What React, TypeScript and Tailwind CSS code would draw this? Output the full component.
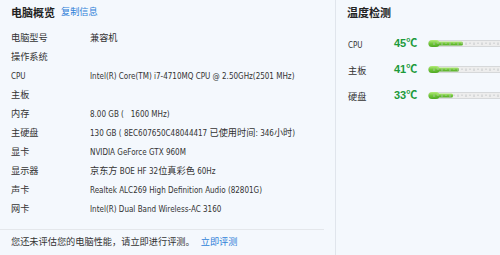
import React from 'react'

const rows: [string, string][] = [
  ['电脑型号', '兼容机'],
  ['操作系统', ''],
  ['CPU', 'Intel(R) Core(TM) i7-4710MQ CPU @ 2.50GHz(2501 MHz)'],
  ['主板', ''],
  ['内存', '8.00 GB (   1600 MHz)'],
  ['主硬盘', '130 GB ( 8EC607650C48044417 已使用时间: 346小时)'],
  ['显卡', 'NVIDIA GeForce GTX 960M'],
  ['显示器', '京东方 BOE HF 32位真彩色 60Hz'],
  ['声卡', 'Realtek ALC269 High Definition Audio (82801G)'],
  ['网卡', 'Intel(R) Dual Band Wireless-AC 3160'],
]

const temps: [string, string, number][] = [
  ['CPU', '45℃', 35],
  ['主板', '41℃', 31],
  ['硬盘', '33℃', 25],
]

// CJK runs get a larger size than latin runs, like the original YaHei/Tahoma mix
function Mixed({ text }: { text: string }) {
  const parts = text.split(/([\u3000-\u9fff\uff00-\uffef]+)/).filter(Boolean)
  return (
    <>
      {parts.map((p, i) =>
        /[\u3000-\u9fff\uff00-\uffef]/.test(p) ? (
          <span key={i} className="text-[9.2px]">{p}</span>
        ) : (
          <span key={i} className="text-[8px] whitespace-pre font-['DejaVu_Sans_Condensed','Liberation_Sans',sans-serif]">{p}</span>
        )
      )}
    </>
  )
}

function TempBar({ fill }: { fill: number }) {
  const ticks = []
  for (let x = 6; x < 80; x += 4) {
    ticks.push(<line key={x} x1={x} y1={3.5} x2={x} y2={x % 8 === 6 ? 6 : 5} stroke="#b9bcbf" strokeWidth={0.8} />)
  }
  return (
    <svg width="80" height="9" viewBox="0 0 80 9" className="block">
      <defs>
        <linearGradient id="g" x1="0" y1="0" x2="0" y2="1">
          <stop offset="0" stopColor="#b4ec7a" />
          <stop offset="0.5" stopColor="#72c93a" />
          <stop offset="1" stopColor="#4fa823" />
        </linearGradient>
      </defs>
      <rect x="0.5" y="1.5" width="82" height="6" rx="3" fill="#ededed" stroke="#d6d8da" />
      {ticks}
      <rect x="0.5" y="1" width="11" height="7" rx="3.5" fill="url(#g)" />
      <rect x="8" y="2.5" width={fill - 8} height="4" rx="1.5" fill="url(#g)" />
      {ticks.filter((_, i) => 6 + i * 4 < fill)}
    </svg>
  )
}

export default function App() {
  return (
    <div className="flex w-[500px] h-[255px] overflow-hidden bg-[#f4f8fd] text-[#333] font-['Liberation_Sans','Noto_Sans_CJK_SC',sans-serif]">
      <div className="w-[336px] flex-shrink-0 flex flex-col border-r border-[#e0e5ec]">
        <div className="h-[26px] flex items-center pl-[11px] gap-[6px]">
          <span className="text-[11px] font-bold text-[#222]">电脑概览</span>
          <span className="text-[9.2px] text-[#2f7fd8]">复制信息</span>
        </div>
        <div className="flex flex-col">
          {rows.map(([k, v]) => (
            <div key={k} className="h-[19px] flex items-center">
              <span className="w-[90px] flex-shrink-0 pl-[11px]"><Mixed text={k} /></span>
              <span className="whitespace-nowrap"><Mixed text={v} /></span>
            </div>
          ))}
        </div>
        <div className="mt-[13px] mr-[11px] border-t border-[#e4e7eb]" />
        <div className="h-[25px] flex items-center pl-[11px] text-[9.2px]">
          <span>您还未评估您的电脑性能，请立即进行评测。</span>
          <span className="ml-[6px] text-[#2f7fd8]">立即评测</span>
        </div>
      </div>
      <div className="flex-1 flex flex-col">
        <div className="h-[26px] flex items-center pl-[11px]">
          <span className="text-[11px] font-bold text-[#222]">温度检测</span>
        </div>
        <div className="flex flex-col pt-[4px]">
          {temps.map(([k, t, f]) => (
            <div key={k} className="h-[26px] flex items-center">
              <span className="w-[58px] pl-[12px]"><Mixed text={k} /></span>
              <span className="w-[34px] text-[11px] font-bold text-[#1c9a3b]">{t}</span>
              <TempBar fill={f} />
            </div>
          ))}
        </div>
      </div>
    </div>
  )
}
